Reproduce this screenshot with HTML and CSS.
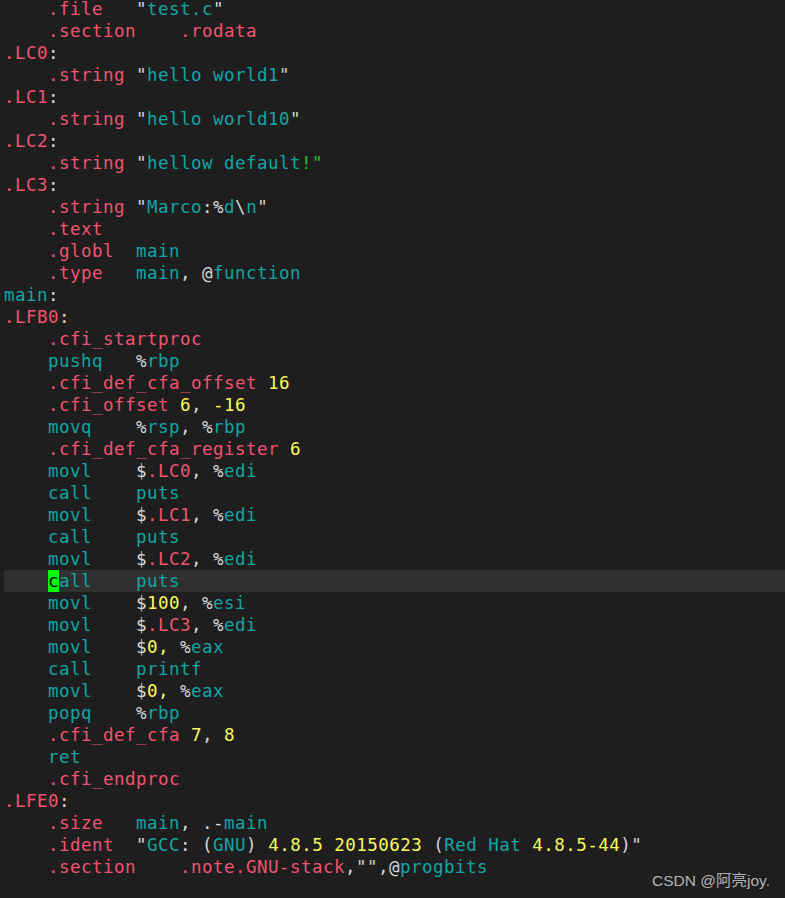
FILE: index.html
```html
<!DOCTYPE html>
<html lang="en">
<head>
    <meta charset="UTF-8">
    <meta name="viewport" content="width=device-width, initial-scale=1.0">
    <title>test.s</title>
    <link rel="stylesheet" href="styles.css">
</head>
<body>
    <div class="terminal">
        <div class="ln">    <span class="k">.file</span>   <span class="w">"</span><span class="c">test.c</span><span class="w">"</span></div>
        <div class="ln">    <span class="k">.section</span>    <span class="k">.rodata</span></div>
        <div class="ln"><span class="k">.LC0</span><span class="w">:</span></div>
        <div class="ln">    <span class="k">.string</span> <span class="w">"</span><span class="c">hello world1</span><span class="w">"</span></div>
        <div class="ln"><span class="k">.LC1</span><span class="w">:</span></div>
        <div class="ln">    <span class="k">.string</span> <span class="w">"</span><span class="c">hello world10</span><span class="w">"</span></div>
        <div class="ln"><span class="k">.LC2</span><span class="w">:</span></div>
        <div class="ln">    <span class="k">.string</span> <span class="w">"</span><span class="c">hellow default</span><span class="g">!"</span></div>
        <div class="ln"><span class="k">.LC3</span><span class="w">:</span></div>
        <div class="ln">    <span class="k">.string</span> <span class="w">"</span><span class="c">Marco</span><span class="w">:%</span><span class="c">d</span><span class="w">\</span><span class="c">n</span><span class="w">"</span></div>
        <div class="ln">    <span class="k">.text</span></div>
        <div class="ln">    <span class="k">.globl</span>  <span class="c">main</span></div>
        <div class="ln">    <span class="k">.type</span>   <span class="c">main</span><span class="w">, @</span><span class="c">function</span></div>
        <div class="ln"><span class="c">main</span><span class="w">:</span></div>
        <div class="ln"><span class="k">.LFB0</span><span class="w">:</span></div>
        <div class="ln">    <span class="k">.cfi_startproc</span></div>
        <div class="ln">    <span class="c">pushq</span>   <span class="w">%</span><span class="c">rbp</span></div>
        <div class="ln">    <span class="k">.cfi_def_cfa_offset</span> <span class="y">16</span></div>
        <div class="ln">    <span class="k">.cfi_offset</span> <span class="y">6</span><span class="w">,</span> <span class="y">-16</span></div>
        <div class="ln">    <span class="c">movq</span>    <span class="w">%</span><span class="c">rsp</span><span class="w">, %</span><span class="c">rbp</span></div>
        <div class="ln">    <span class="k">.cfi_def_cfa_register</span> <span class="y">6</span></div>
        <div class="ln">    <span class="c">movl</span>    <span class="w">$</span><span class="k">.LC0</span><span class="w">, %</span><span class="c">edi</span></div>
        <div class="ln">    <span class="c">call</span>    <span class="c">puts</span></div>
        <div class="ln">    <span class="c">movl</span>    <span class="w">$</span><span class="k">.LC1</span><span class="w">, %</span><span class="c">edi</span></div>
        <div class="ln">    <span class="c">call</span>    <span class="c">puts</span></div>
        <div class="ln">    <span class="c">movl</span>    <span class="w">$</span><span class="k">.LC2</span><span class="w">, %</span><span class="c">edi</span></div>
        <div class="ln cur">    <span class="cursor">c</span><span class="c">all</span>    <span class="c">puts</span></div>
        <div class="ln">    <span class="c">movl</span>    <span class="w">$</span><span class="y">100</span><span class="w">, %</span><span class="c">esi</span></div>
        <div class="ln">    <span class="c">movl</span>    <span class="w">$</span><span class="k">.LC3</span><span class="w">, %</span><span class="c">edi</span></div>
        <div class="ln">    <span class="c">movl</span>    <span class="w">$</span><span class="y">0,</span> <span class="w">%</span><span class="c">eax</span></div>
        <div class="ln">    <span class="c">call</span>    <span class="c">printf</span></div>
        <div class="ln">    <span class="c">movl</span>    <span class="w">$</span><span class="y">0,</span> <span class="w">%</span><span class="c">eax</span></div>
        <div class="ln">    <span class="c">popq</span>    <span class="w">%</span><span class="c">rbp</span></div>
        <div class="ln">    <span class="k">.cfi_def_cfa</span> <span class="y">7</span><span class="w">,</span> <span class="y">8</span></div>
        <div class="ln">    <span class="c">ret</span></div>
        <div class="ln">    <span class="k">.cfi_endproc</span></div>
        <div class="ln"><span class="k">.LFE0</span><span class="w">:</span></div>
        <div class="ln">    <span class="k">.size</span>   <span class="c">main</span><span class="w">, .-</span><span class="c">main</span></div>
        <div class="ln">    <span class="k">.ident</span>  <span class="w">"</span><span class="c">GCC</span><span class="w">: (</span><span class="c">GNU</span><span class="w">)</span> <span class="y">4.8.5 20150623</span> <span class="w">(</span><span class="c">Red Hat</span> <span class="y">4.8.5-44</span><span class="w">)"</span></div>
        <div class="ln">    <span class="k">.section</span>    <span class="k">.note.GNU-stack</span><span class="w">,"",@</span><span class="c">progbits</span></div>
    </div>
    <div class="watermark">CSDN @阿亮joy.</div>
</body>
</html>
```

FILE: styles.css
```css
html, body {
    margin: 0;
    height: 100%;
    background: #1e1e1e;
    overflow: hidden;
}
.terminal {
    margin-top: -2px;
    padding-left: 4px;
    font-family: 'DejaVu Sans Mono', monospace;
    font-size: 17.5px;
    letter-spacing: 0.465px;
    color: #d8d8d8;
}
.ln {
    height: 22px;
    line-height: 22px;
    white-space: pre;
}
.cur {
    background: #303030;
}
.k {
    color: #f0536f;
}
.c {
    color: #12a5a5;
}
.w {
    color: #d8d8d8;
}
.y {
    color: #fafa5a;
}
.g {
    color: #22c322;
}
.cursor {
    display: inline-block;
    width: 11px;
    height: 22px;
    vertical-align: top;
    background: #00ff00;
    color: #000000;
}
.watermark {
    position: absolute;
    right: 15px;
    bottom: 8px;
    font-family: 'Liberation Sans', 'Noto Sans CJK SC', sans-serif;
    font-size: 15.5px;
    color: #b4b4b4;
}
```
